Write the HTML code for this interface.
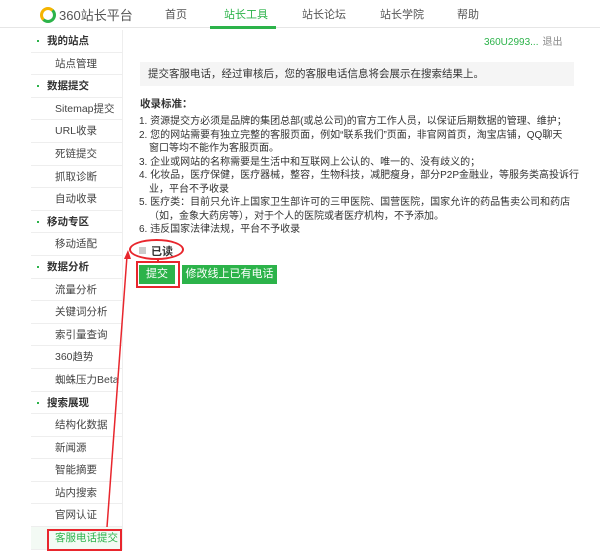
<!DOCTYPE html>
<html><head><meta charset="utf-8"><style>
*{margin:0;padding:0;box-sizing:border-box}
body{width:600px;height:549px;overflow:hidden;background:#fff;font-family:"Liberation Sans","Noto Sans CJK SC",sans-serif;color:#333;position:relative}
.hd{position:absolute;left:0;top:0;width:600px;height:28px;border-bottom:1px solid #e6e6e6}
.logo{position:absolute;left:40px;top:5px;font-size:13px;color:#555}
.logo i{display:inline-block;width:16px;height:16px;border-radius:50%;border:3px solid #f4b400;border-right-color:#2cb34a;border-bottom-color:#2cb34a;vertical-align:-3px;margin-right:3px}
.nav{position:absolute;top:6px;font-size:11px;color:#555}
.ul{position:absolute;left:210px;top:26px;width:66px;height:3px;background:#2cb34a}
.side{position:absolute;left:31px;top:30px;width:92px;border-right:1px solid #eee}
.side div{height:22.6px;line-height:22px;font-size:10.5px;border-bottom:1px solid #eee;padding-left:24px;color:#444;white-space:nowrap}
.side div.h{padding-left:16px;font-weight:bold;color:#333;position:relative}
.side div.h:before{content:"";position:absolute;left:6px;top:10px;width:2px;height:2px;background:#2cb34a}
.side div.on{color:#2cb34a;background:#f3faf4}
.user{position:absolute;left:484px;top:33px;font-size:10px;color:#2cb34a}
.user span{color:#888;margin-left:4px}
.box{position:absolute;left:140px;top:62px;width:434px;height:24px;background:#f5f5f5;font-size:10.5px;line-height:24px;padding-left:8px}
.t{position:absolute;left:140px;top:96px;font-size:10.5px;font-weight:bold}
.list{position:absolute;left:139px;top:115px;font-size:10px;line-height:13.5px;white-space:nowrap;letter-spacing:0}
.list p.i{padding-left:10px}
.chk{position:absolute;left:139px;top:243px;font-size:11px;font-weight:bold}
.chk b{display:inline-block;width:7px;height:7px;background:#ccc;margin-right:5px;vertical-align:1px}
.btn{position:absolute;top:265px;height:19px;background:#2cb34a;color:#fff;font-size:11px;line-height:19px;text-align:center}
.red{position:absolute;border:2px solid #e8262d}
</style></head><body>
<div class="hd"></div>
<div class="logo"><i></i>360站长平台</div>
<div class="nav" style="left:165px">首页</div>
<div class="nav" style="left:224px;color:#2cb34a">站长工具</div>
<div class="nav" style="left:302px">站长论坛</div>
<div class="nav" style="left:380px">站长学院</div>
<div class="nav" style="left:457px">帮助</div>
<div class="ul"></div>
<div class="side">
<div class="h">我的站点</div><div>站点管理</div><div class="h">数据提交</div><div>Sitemap提交</div><div>URL收录</div><div>死链提交</div><div>抓取诊断</div><div>自动收录</div><div class="h">移动专区</div><div>移动适配</div><div class="h">数据分析</div><div>流量分析</div><div>关键词分析</div><div>索引量查询</div><div>360趋势</div><div>蜘蛛压力Beta</div><div class="h">搜索展现</div><div>结构化数据</div><div>新闻源</div><div>智能摘要</div><div>站内搜索</div><div>官网认证</div><div class="on">客服电话提交</div>
</div>
<div class="user">360U2993...<span>退出</span></div>
<div class="box">提交客服电话，经过审核后，您的客服电话信息将会展示在搜索结果上。</div>
<div class="t">收录标准：</div>
<div class="list">
<p>1. 资源提交方必须是品牌的集团总部(或总公司)的官方工作人员，以保证后期数据的管理、维护；</p>
<p>2. 您的网站需要有独立完整的客服页面，例如“联系我们”页面，非官网首页，淘宝店铺，QQ聊天</p>
<p class="i">窗口等均不能作为客服页面。</p>
<p>3. 企业或网站的名称需要是生活中和互联网上公认的、唯一的、没有歧义的；</p>
<p>4. 化妆品，医疗保健，医疗器械，整容，生物科技，减肥瘦身，部分P2P金融业，等服务类高投诉行</p>
<p class="i">业，平台不予收录</p>
<p>5. 医疗类：目前只允许上国家卫生部许可的三甲医院、国营医院，国家允许的药品售卖公司和药店</p>
<p class="i">（如，金象大药房等），对于个人的医院或者医疗机构，不予添加。</p>
<p>6. 违反国家法律法规，平台不予收录</p>
</div>
<div class="chk"><b></b>已读</div>
<div class="btn" style="left:139px;width:36px">提交</div>
<div class="btn" style="left:182px;width:95px">修改线上已有电话</div>
<div class="red" style="left:136px;top:261px;width:44px;height:27px"></div>
<div class="red" style="left:47px;top:529px;width:75px;height:22px"></div>
<div class="red" style="left:129px;top:239px;width:55px;height:21px;border-radius:50%"></div>
<svg style="position:absolute;left:0;top:0" width="600" height="549">
<line x1="158" y1="259" x2="158" y2="262" stroke="#e8262d" stroke-width="2"/>
<line x1="107" y1="527" x2="127" y2="256" stroke="#e8262d" stroke-width="1.5"/>
<polygon points="128,250 124,259 131,259" fill="#e8262d"/>
</svg>
</body></html>
